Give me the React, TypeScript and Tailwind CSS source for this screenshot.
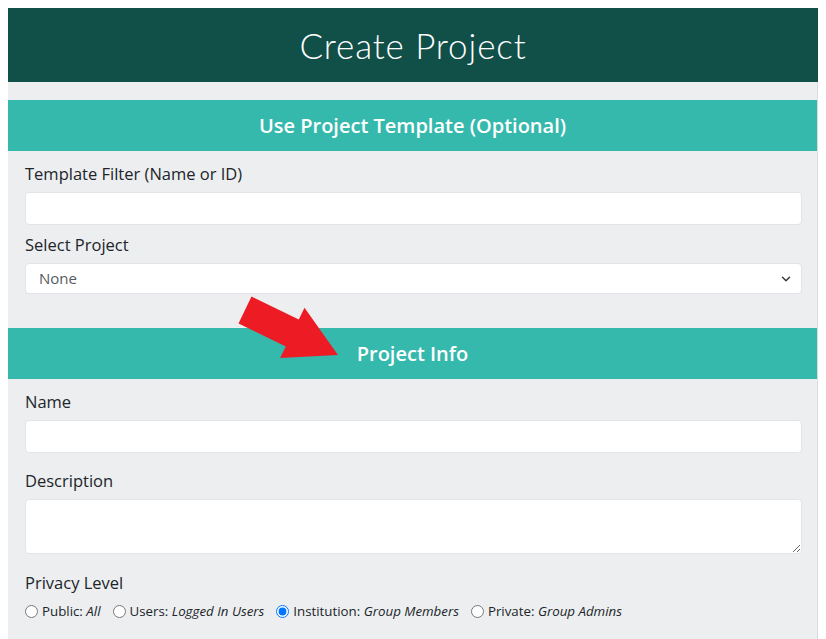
import { ChevronDown } from "lucide-react";

const sans = { fontFamily: '"Open Sans", "Noto Sans", sans-serif' };

function SectionBar({ title }: { title: string }) {
  return (
    <div className="h-[51px] bg-[#35b9ad] flex items-center justify-center text-white text-[20px] font-semibold">
      {title}
    </div>
  );
}

function Field({ label, children, className = "" }: { label: string; children: React.ReactNode; className?: string }) {
  return (
    <div className={className}>
      <label className="block text-[16.5px] leading-6 text-[#212529] mb-[6px]">{label}</label>
      {children}
    </div>
  );
}

const inputCls =
  "block w-full bg-white border border-[#e2e4e7] rounded-[4px] outline-none px-3 text-[15px]";

const privacy = [
  { key: "public", label: "Public:", who: "All" },
  { key: "users", label: "Users:", who: "Logged In Users" },
  { key: "institution", label: "Institution:", who: "Group Members" },
  { key: "private", label: "Private:", who: "Group Admins" },
];

export default function App() {
  return (
    <div className="relative min-h-screen bg-white pt-2 px-2" style={sans}>
      <div className="w-[810px]">
        <div
          className="h-[74px] bg-[#114f49] flex items-center justify-center text-white text-[35px] font-light tracking-wide"
          style={{ fontFamily: 'Lato, "Noto Sans", sans-serif' }}
        >
          Create Project
        </div>

        <div className="bg-[#eceef0] border-r border-[#d9dbde] pt-[18px] pb-6">
          <SectionBar title="Use Project Template (Optional)" />
          <div className="pl-[17px] pr-[15px] pt-[11px] pb-[34px]">
            <Field label="Template Filter (Name or ID)">
              <input className={`${inputCls} h-[33px]`} />
            </Field>
            <Field label="Select Project" className="mt-2">
              <div className="relative">
                <select className={`${inputCls} h-[31px] appearance-none text-[#555b61] pl-[13px]`}>
                  <option>None</option>
                </select>
                <ChevronDown
                  className="absolute right-[9px] top-1/2 -translate-y-1/2 w-[14px] h-[14px] text-[#343a40] pointer-events-none"
                  strokeWidth={2.5}
                />
              </div>
            </Field>
          </div>

          <SectionBar title="Project Info" />
          <div className="pl-[17px] pr-[15px] pt-[11px]">
            <Field label="Name">
              <input className={`${inputCls} h-[33px]`} />
            </Field>
            <Field label="Description" className="mt-4">
              <textarea className={`${inputCls} h-[55px] py-1 resize-y`} />
            </Field>
            <div className="mt-[17px]">
              <div className="text-[16.5px] leading-6 text-[#212529] mb-[7px]">Privacy Level</div>
              <div className="flex items-center gap-[12px] text-[13.3px] text-[#212529]">
                {privacy.map((p) => (
                  <label key={p.key} className="flex items-center gap-[4px]">
                    <input
                      type="radio"
                      name="privacy"
                      defaultChecked={p.key === "institution"}
                      className="w-[13px] h-[13px] m-0"
                    />
                    <span>
                      {p.label} <em>{p.who}</em>
                    </span>
                  </label>
                ))}
              </div>
            </div>
          </div>
        </div>
      </div>

      {/* red pointer arrow drawn over the form */}
      <svg className="absolute left-0 top-0 pointer-events-none" width="826" height="639">
        <polygon
          points="251.5,296.5 298.8,319.4 304.5,307.7 338,355 280.1,358.1 285.8,346.4 238.5,323.5"
          fill="#ed1c24"
        />
      </svg>
    </div>
  );
}
